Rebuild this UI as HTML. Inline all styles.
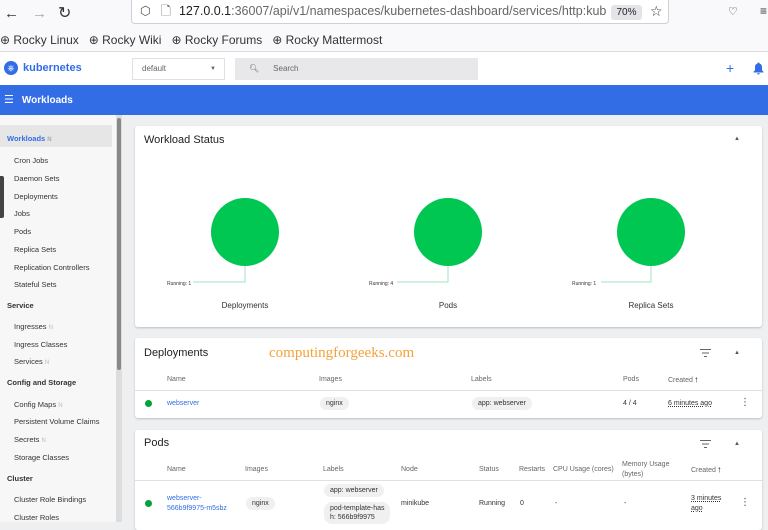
<!DOCTYPE html>
<html><head><meta charset="utf-8"><style>
*{box-sizing:border-box;margin:0;padding:0}
body{width:768px;height:522px;overflow:hidden;font-family:"Liberation Sans","DejaVu Sans",sans-serif;background:#eeeff1;position:relative;color:#202124}
.abs{position:absolute}
.tb{left:0;top:0;width:768px;height:28px;background:#f9f9fb}
.url{left:131px;top:0;width:538px;height:24px;background:#fff;border:1px solid #cfcfd8;border-top:none;border-radius:0 0 4px 4px;font-size:12.5px;line-height:23px}
.bm{left:0;top:28px;width:768px;height:24px;background:#f9f9fb;border-bottom:1px solid #dcdce0;font-size:12px;color:#333;line-height:24px}
.hdr{left:0;top:52px;width:768px;height:33px;background:#fff}
.blue{left:0;top:85px;width:768px;height:30px;background:#326de6;color:#fff;font-size:10px;line-height:30px;font-weight:bold}
.side{left:0;top:115px;width:116px;height:407px;background:#f7f7f7;font-size:7.5px;color:#333}
.side div{position:absolute;left:14px}
.side .h{left:7px;font-weight:bold}
.card{background:#fff;border-radius:3px;box-shadow:0 1px 2px rgba(0,0,0,.2)}
.th{font-size:7px;color:#666;position:absolute}
.td{font-size:7px;color:#333;position:absolute}
.chip{position:absolute;background:#f0f0f0;border-radius:8px;font-size:7px;padding:3px 6px;color:#333}
.lnk{color:#326de6}
</style></head><body>
<div class="abs tb"></div>
<div class="abs" style="left:4px;top:5px;font-size:15px;color:#333">←</div>
<div class="abs" style="left:32px;top:5px;font-size:15px;color:#aaa">→</div>
<div class="abs" style="left:58px;top:3px;font-size:16px;color:#333">↻</div>
<div class="abs url"><div style="position:absolute;left:0;top:0;width:474px;height:23px;overflow:hidden;white-space:nowrap"><span style="margin-left:8px;color:#555">⬡</span><span style="margin-left:10px;color:#555">🗋</span><span style="margin-left:8px;color:#222">127.0.0.1</span><span style="color:#666">:36007/api/v1/namespaces/kubernetes-dashboard/services/http:kuberr</span></div></div>
<div class="abs" style="left:611px;top:5px;width:31px;height:15px;background:#e4e4e8;border-radius:3px;font-size:10px;text-align:center;line-height:15px">70%</div>
<div class="abs" style="left:650px;top:3px;font-size:14px;color:#333">☆</div>
<div class="abs" style="left:728px;top:5px;font-size:11px;color:#333">♡</div>
<div class="abs" style="left:760px;top:4px;font-size:12px;color:#333">≡</div>
<div class="abs bm"><span>⊕ Rocky Linux</span><span style="margin-left:10px">⊕ Rocky Wiki</span><span style="margin-left:10px">⊕ Rocky Forums</span><span style="margin-left:10px">⊕ Rocky Mattermost</span></div>
<div class="abs hdr"></div>
<div class="abs" style="left:4px;top:61px;width:14px;height:14px;border-radius:50%;background:#326de6;color:#fff;font-size:9px;text-align:center;line-height:14px">⎈</div>
<div class="abs" style="left:23px;top:62px;font-size:11px;font-weight:bold;color:#326de6">kubernetes</div>
<div class="abs" style="left:132px;top:58px;width:93px;height:22px;border:1px solid #e0e0e0;font-size:8px;color:#666;line-height:20px;padding-left:9px">default<span style="position:absolute;right:8px;font-size:6px">▼</span></div>
<div class="abs" style="left:235px;top:58px;width:243px;height:22px;background:#e8e8ea;font-size:8px;color:#666;line-height:22px;padding-left:14px">🔍︎<span style="margin-left:14px">Search</span></div>
<div class="abs" style="left:726px;top:60px;font-size:14px;color:#326de6">+</div>
<svg class="abs" style="left:753px;top:62px" width="11" height="13" viewBox="0 0 11 13"><path d="M5.5 0.5C6.3 0.5 6.6 1 6.6 1.6 8.4 2.1 9 3.6 9 5.2V8.3L10.5 9.8V10.5H0.5V9.8L2 8.3V5.2C2 3.6 2.6 2.1 4.4 1.6 4.4 1 4.7 0.5 5.5 0.5ZM4.2 11.2H6.8C6.8 12 6.2 12.5 5.5 12.5S4.2 12 4.2 11.2Z" fill="#326de6"/></svg>
<div class="abs blue"><span style="margin-left:4px;font-size:11px">☰</span><span style="margin-left:8px">Workloads</span></div>
<div class="abs side">
<div style="left:0;top:10px;width:112px;height:22px;background:#e6e6e6"></div>
<div class="h" style="top:19px;color:#326de6">Workloads <span style="color:#aaa;font-size:6px">N</span></div>
<div style="top:41px">Cron Jobs</div><div style="top:59px">Daemon Sets</div><div style="top:77px">Deployments</div><div style="top:94px">Jobs</div><div style="top:112px">Pods</div><div style="top:130px">Replica Sets</div><div style="top:148px">Replication Controllers</div><div style="top:165px">Stateful Sets</div>
<div class="h" style="top:186px">Service</div>
<div style="top:207px">Ingresses <span style="color:#bbb;font-size:6px">N</span></div><div style="top:225px">Ingress Classes</div><div style="top:242px">Services <span style="color:#bbb;font-size:6px">N</span></div>
<div class="h" style="top:263px">Config and Storage</div>
<div style="top:285px">Config Maps <span style="color:#bbb;font-size:6px">N</span></div><div style="top:302px">Persistent Volume Claims</div><div style="top:320px">Secrets <span style="color:#bbb;font-size:6px">N</span></div><div style="top:338px">Storage Classes</div>
<div class="h" style="top:359px">Cluster</div>
<div style="top:380px">Cluster Role Bindings</div><div style="top:398px">Cluster Roles</div>
</div>
<div class="abs" style="left:0;top:176px;width:4px;height:42px;background:#444;border-radius:0 2px 2px 0"></div>
<div class="abs" style="left:116px;top:115px;width:6px;height:407px;background:#ddd"></div>
<div class="abs" style="left:117px;top:118px;width:4px;height:252px;background:#888;border-radius:2px"></div>

<div class="abs card" style="left:135px;top:126px;width:627px;height:201px"></div>
<div class="abs" style="left:144px;top:134px;font-size:11px">Workload Status</div>
<div class="abs" style="left:734px;top:136px;font-size:6px;color:#555">▲</div>
<svg class="abs" style="left:135px;top:126px" width="627" height="201">
<g font-family="Liberation Sans,sans-serif">
<circle cx="110" cy="106" r="34" fill="#00c752"/><path d="M110 140V156H58" stroke="#9fe3c0" fill="none"/><text x="32" y="159" font-size="5" fill="#333">Running: 1</text><text x="110" y="182" font-size="8" text-anchor="middle" fill="#333">Deployments</text>
<circle cx="313" cy="106" r="34" fill="#00c752"/><path d="M313 140V156H262" stroke="#9fe3c0" fill="none"/><text x="234" y="159" font-size="5" fill="#333">Running: 4</text><text x="313" y="182" font-size="8" text-anchor="middle" fill="#333">Pods</text>
<circle cx="516" cy="106" r="34" fill="#00c752"/><path d="M516 140V156H466" stroke="#9fe3c0" fill="none"/><text x="437" y="159" font-size="5" fill="#333">Running: 1</text><text x="516" y="182" font-size="8" text-anchor="middle" fill="#333">Replica Sets</text>
</g></svg>

<div class="abs card" style="left:135px;top:338px;width:627px;height:80px"></div>
<div class="abs" style="left:144px;top:347px;font-size:11px">Deployments</div>
<div class="abs" style="left:269px;top:345px;font-size:15px;color:#f4a23a;font-family:'Liberation Serif',serif">computingforgeeks.com</div>
<svg class="abs" style="left:700px;top:349px" width="11" height="8"><path d="M0 0.5H11M2 4H9M4 7.5H7" stroke="#666"/></svg>
<div class="abs" style="left:734px;top:350px;font-size:6px;color:#555">▲</div>
<div class="th" style="left:167px;top:376px">Name</div><div class="th" style="left:319px;top:376px">Images</div><div class="th" style="left:471px;top:376px">Labels</div><div class="th" style="left:623px;top:376px">Pods</div><div class="th" style="left:668px;top:376px">Created 🠕</div>
<div class="abs" style="left:135px;top:390px;width:627px;height:1px;background:#e0e0e0"></div>
<div class="abs" style="left:145px;top:400px;width:7px;height:7px;border-radius:50%;background:#00a23a"></div>
<div class="td lnk" style="left:167px;top:400px">webserver</div>
<div class="chip" style="left:320px;top:397px">nginx</div>
<div class="chip" style="left:472px;top:397px">app: webserver</div>
<div class="td" style="left:623px;top:400px">4 / 4</div>
<div class="td" style="left:668px;top:400px;text-decoration:underline dotted">6 minutes ago</div>
<div class="abs" style="left:740px;top:397px;font-size:10px;color:#444">⋮</div>

<div class="abs card" style="left:135px;top:430px;width:627px;height:100px"></div>
<div class="abs" style="left:144px;top:437px;font-size:11px">Pods</div>
<svg class="abs" style="left:700px;top:440px" width="11" height="8"><path d="M0 0.5H11M2 4H9M4 7.5H7" stroke="#666"/></svg>
<div class="abs" style="left:734px;top:441px;font-size:6px;color:#555">▲</div>
<div class="th" style="left:167px;top:466px">Name</div><div class="th" style="left:245px;top:466px">Images</div><div class="th" style="left:323px;top:466px">Labels</div><div class="th" style="left:401px;top:466px">Node</div><div class="th" style="left:479px;top:466px">Status</div><div class="th" style="left:519px;top:466px">Restarts</div><div class="th" style="left:553px;top:466px">CPU Usage (cores)</div><div class="th" style="left:622px;top:460px;line-height:10px">Memory Usage<br>(bytes)</div><div class="th" style="left:691px;top:466px">Created 🠕</div>
<div class="abs" style="left:135px;top:480px;width:627px;height:1px;background:#e0e0e0"></div>
<div class="abs" style="left:145px;top:500px;width:7px;height:7px;border-radius:50%;background:#00a23a"></div>
<div class="td lnk" style="left:167px;top:494px;line-height:10px">webserver-<br>566b9f9975-m5sbz</div>
<div class="chip" style="left:246px;top:497px">nginx</div>
<div class="chip" style="left:324px;top:484px">app: webserver</div>
<div class="chip" style="left:324px;top:502px;line-height:9px;padding:2px 6px">pod-template-has<br>h: 566b9f9975</div>
<div class="td" style="left:401px;top:500px">minikube</div>
<div class="td" style="left:479px;top:500px">Running</div>
<div class="td" style="left:520px;top:500px">0</div>
<div class="td" style="left:555px;top:500px">-</div><div class="td" style="left:624px;top:500px">-</div>
<div class="td" style="left:691px;top:494px;line-height:10px;text-decoration:underline dotted">3 minutes<br>ago</div>
<div class="abs" style="left:740px;top:497px;font-size:10px;color:#444">⋮</div>
</body></html>
